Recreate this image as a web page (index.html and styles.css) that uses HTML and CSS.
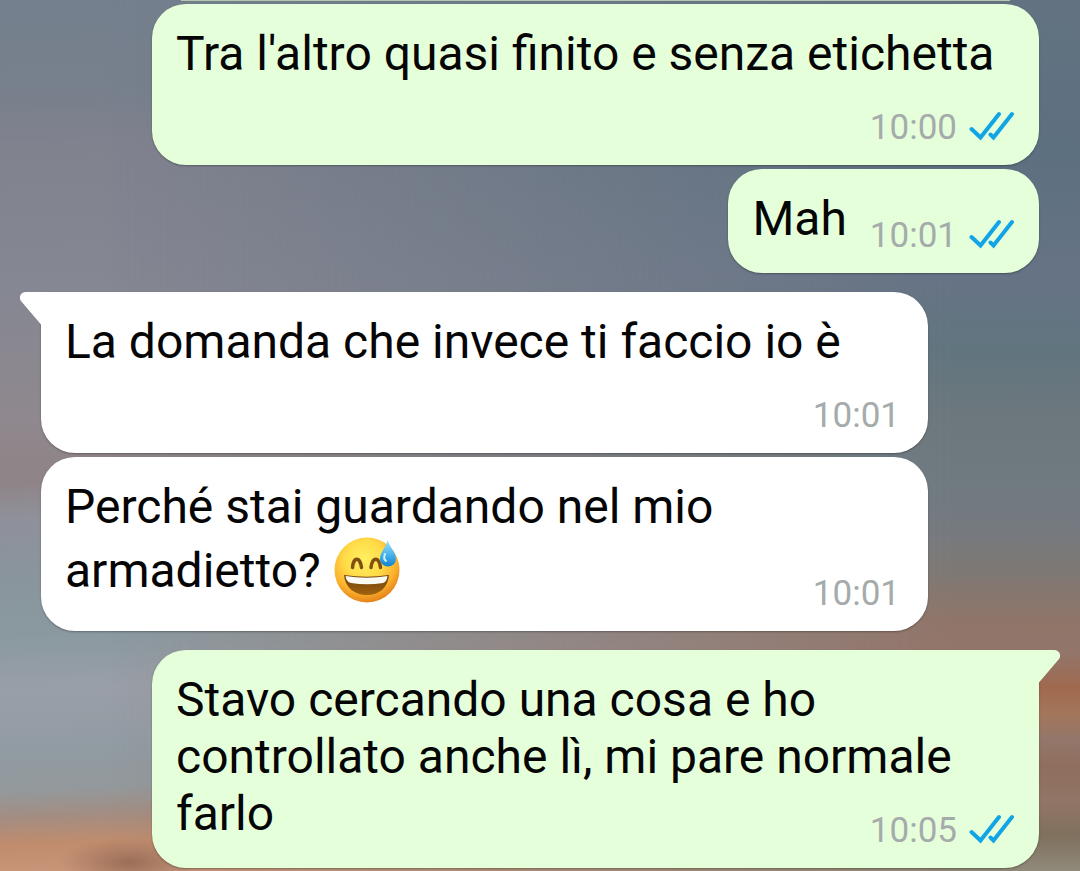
FILE: index.html
```html
<!DOCTYPE html>
<html lang="it">
<head>
<meta charset="utf-8">
<meta name="viewport" content="width=device-width, initial-scale=1">
<title>Chat</title>
<link rel="stylesheet" href="styles.css">
</head>
<body>
<svg class="defs" width="0" height="0" aria-hidden="true">
  <symbol id="ticks" viewBox="0 0 45 30">
    <path d="M2.500 18 L11.500 26.500 L30 3 M21.500 23.500 L24.500 26.500 L43 3" fill="none" stroke="#12a5e6" stroke-width="4" stroke-linecap="round" stroke-linejoin="miter"/>
  </symbol>
</svg>
<main class="chat">
  <div class="previous"></div>

  <article class="bubble sent stacked">
    <p class="text">Tra l'altro quasi finito e senza etichetta</p>
    <div class="meta"><time>10:00</time><svg class="ticks" role="img" aria-label="Letto"><use href="#ticks"/></svg></div>
  </article>

  <article class="bubble sent short">
    <p class="text">Mah</p>
    <div class="meta"><time>10:01</time><svg class="ticks" role="img" aria-label="Letto"><use href="#ticks"/></svg></div>
  </article>

  <article class="bubble received stacked first">
    <svg class="tail" viewBox="0 0 23 34" aria-hidden="true"><path d="M23 0H6C1 0-2 5 1 9L21 32.500V34H23Z" fill="#fff"/></svg>
    <p class="text">La domanda che invece ti faccio io è</p>
    <div class="meta"><time>10:01</time></div>
  </article>

  <article class="bubble received overlaid">
    <p class="text">Perché stai guardando nel mio<br>armadietto? <svg class="emoji" viewBox="0 0 70 70" role="img" aria-label="Sorriso con goccia di sudore">
      <defs>
        <radialGradient id="face" cx=".45" cy=".34" r=".66">
          <stop offset="0" stop-color="#fff060"/><stop offset=".45" stop-color="#ffdc48"/><stop offset=".78" stop-color="#fab02b"/><stop offset="1" stop-color="#e5821a"/>
        </radialGradient>
        <linearGradient id="mouth" x2="0" y2="1"><stop offset="0" stop-color="#70410c"/><stop offset="1" stop-color="#a0620f"/></linearGradient>
        <linearGradient id="drop" x2="0" y2="1"><stop offset="0" stop-color="#a5e0f8"/><stop offset=".5" stop-color="#4fb9ef"/><stop offset="1" stop-color="#1283cc"/></linearGradient>
      </defs>
      <circle cx="34" cy="35" r="32.500" fill="url(#face)"/>
      <path d="M19.500 32.500C20.500 21.500 27 21.500 28.500 32.500M38 32.500C39.500 21.500 46 21.500 47.500 32.500" fill="none" stroke="#805013" stroke-width="3.500" stroke-linecap="round"/>
      <path d="M11 40Q34 43.500 56 40C55 53 46 60 34 60S12 53 11 40Z" fill="url(#mouth)"/>
      <path d="M12.500 41Q34 44.500 54.500 41C54 45 52.500 47.500 50 48Q34 50.500 18 48C15 47.500 13 45 12.500 41Z" fill="#fafaf5"/>
      <path d="M54.500 5C57 13 63 17 63 23.500C63 34 47 34 47 23.500C47 17 53 13 54.500 5Z" fill="url(#drop)"/>
      <path d="M52 19Q50 24 53 26" fill="none" stroke="#cdf1ff" stroke-width="2" stroke-linecap="round"/>
    </svg></p>
    <div class="meta"><time>10:01</time></div>
  </article>

  <article class="bubble sent overlaid first">
    <svg class="tail" viewBox="0 0 23 34" aria-hidden="true"><path d="M0 0H17C22 0 25 5 22 9L2 32.500V34H0Z" fill="#e5ffdb"/></svg>
    <p class="text">Stavo cercando una cosa e ho<br>controllato anche lì, mi pare normale<br>farlo</p>
    <div class="meta"><time>10:05</time><svg class="ticks" role="img" aria-label="Letto"><use href="#ticks"/></svg></div>
  </article>
</main>
</body>
</html>
```
FILE: styles.css
```css
* { box-sizing: border-box; }

body {
  margin: 0;
  font-family: Roboto, "Liberation Sans", sans-serif;
  color: #050505;
}

.defs { position: absolute; }

/* Sunset wallpaper: left-hand tones, with right-hand tones faded over them */
.chat {
  position: relative;
  isolation: isolate;
  display: flex;
  flex-direction: column;
  gap: 4px;
  min-height: 100vh;
  padding: 0 41px 2px;
  overflow: hidden;
  background:
    radial-gradient(ellipse 70px 24px at 12% 99%, #9c6e58 0%, transparent 100%),
    linear-gradient(178deg, #75808e 0%, #77808c 10%, #80828e 16%, #858792 32%, #8f888e 46%, #8f8487 53%, #8f909a 57%, #89959d 64%, #8a99a0 70%, #999fa8 76%, #919ba2 83%, #93999c 87%, #a38d82 90%, #c08c6d 93%, #cb987c 97%, #c08d73 100%);
}

.chat::before {
  content: "";
  position: absolute;
  inset: 0;
  z-index: -1;
  background: linear-gradient(180deg, #627281 0%, #5d7080 18%, #667385 32%, #61757f 40%, #6d777d 48%, #6e7a80 54%, #757a7f 61%, #7f7872 66%, #8f7569 71%, #93756a 75%, #a0694e 79%, #a3765c 82%, #92776a 85%, #8f6e5d 88%, #917566 92%, #80705e 96%, #908a7a 100%);
  mask-image: linear-gradient(90deg, transparent 10%, #000 88%);
}

.previous {
  height: 1px;
  margin: 0 29px -1px 140px;
  background: #b4c6ae;
}

.bubble {
  position: relative;
  padding: 21px 25px 16px 24px;
  border-radius: 34px;
  box-shadow: 0 1px 2px rgba(0, 0, 0, .3);
}

.sent { margin-left: 111px; background: #e5ffdb; }
.received { margin-right: 111px; padding-right: 28px; background: #fff; }

.first { margin-top: 15px; }
.received.first { border-top-left-radius: 0; }
.sent.first { border-top-right-radius: 0; }

.stacked { display: flex; flex-direction: column; gap: 25px; }
.short { display: flex; align-items: flex-end; align-self: flex-end; gap: 23px; }

/* The time shares the text's cell and sits in its lower corner */
.overlaid { display: grid; }
.overlaid > .text,
.overlaid > .meta { grid-area: 1 / 1; }

.text { margin: 0; font-size: 48px; line-height: 57px; }
.short .text,
.overlaid .text { padding-bottom: 10px; }

.meta {
  display: flex;
  align-items: center;
  align-self: flex-end;
  justify-self: end;
  gap: 12px;
  font-size: 35px;
  line-height: 42px;
  color: #a5abab;
}

.ticks { width: 45px; height: 30px; margin-bottom: 4px; }
.emoji { width: 70px; height: 70px; vertical-align: -18px; }

.tail { position: absolute; top: 0; width: 23px; height: 34px; }
.received .tail { left: -21px; }
.sent .tail { right: -21px; }
```
